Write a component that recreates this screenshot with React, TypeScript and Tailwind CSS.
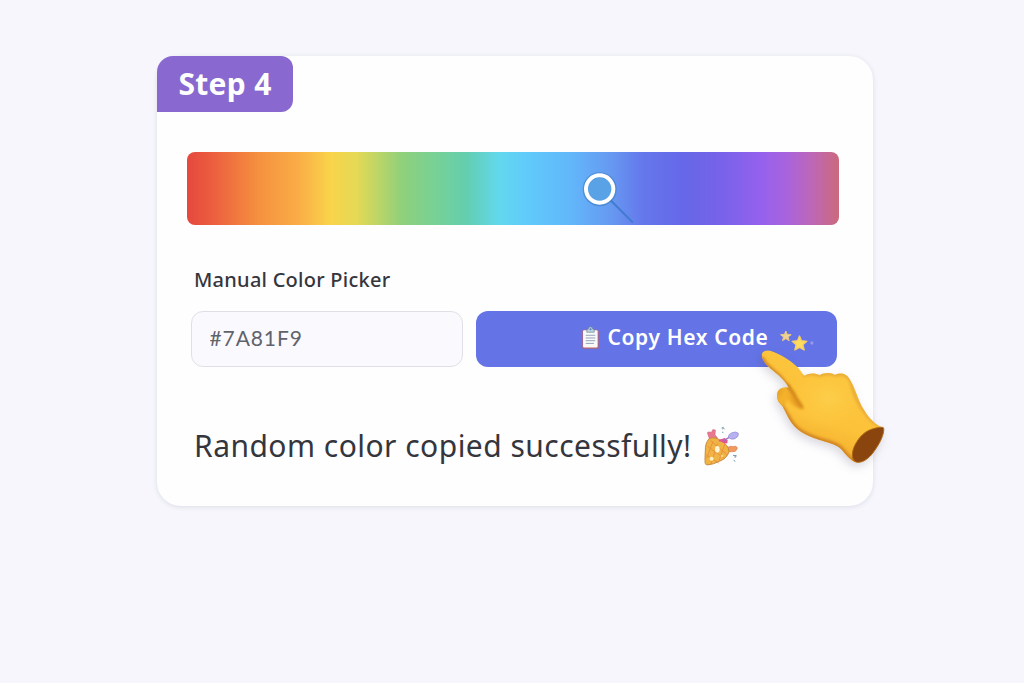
import { useState } from "react";

const SPECTRUM =
    "bg-[linear-gradient(90deg,#e5483e_0%,#ec5e3f_4%,#f5913f_11%,#faac46_17%,#f9d44a_22%,#e5d955_26%,#8fd07b_33%,#78d195_38%,#63ceb0_43%,#62d8ef_48%,#60cbfa_52%,#62b6fa_59%,#6699f1_65%,#6577ec_70%,#6568e8_76%,#7862ea_82%,#9561ed_88%,#a963dc_92%,#bd67b5_96%,#cc697c_100%)]";

function Magnifier() {
    return (
        <svg viewBox="0 0 240 225" className="absolute left-[383px] top-2 w-20 h-[75px]" aria-hidden="true">
            <path d="M124 123L187 186" stroke="#427cd0" strokeWidth="6" strokeLinecap="round" />
            <circle cx="89" cy="88" r="43" fill="#59a2e5" stroke="#397bbd" strokeOpacity=".55" strokeWidth="16" />
            <circle cx="89" cy="87" r="41" fill="none" stroke="#fff" strokeWidth="12" />
        </svg>
    );
}

function Clipboard() {
    return (
        <svg viewBox="0 0 56 70" className="w-[19px] h-6" aria-hidden="true">
            <rect x="4" y="11" width="48" height="56" rx="5" fill="#b9636c" />
            <rect x="6" y="12" width="43" height="51" rx="3" fill="#faf9f7" />
            <path d="M17 18v-6q0-3 4-3 1-7 7-7t7 7q4 0 4 3v6z" fill="#b9d6dc" stroke="#68869c" strokeWidth="2" />
            <circle cx="28" cy="9" r="3" fill="#6273b8" />
            <path d="M14 27h28M14 35h28M14 43h28M14 51h24" stroke="#8194b5" strokeWidth="2.5" />
        </svg>
    );
}

function Stars() {
    return (
        <svg viewBox="0 0 110 66" className="w-[37px] h-[22px]" aria-hidden="true">
            <path d="M20 3l4 10 12 1-9 7 3 11-10-6-10 6 3-11-9-7 12-1z" fill="#f1d391" stroke="#e6c689" strokeWidth="3" strokeLinejoin="round" />
            <path d="M61 18l6 14 16 2-12 10 4 16-14-8-14 8 4-16-12-10 16-2z" fill="#ffdc5b" stroke="#f2cd68" strokeWidth="4" strokeLinejoin="round" />
            <circle cx="98" cy="39" r="5" fill="#9298eb" />
        </svg>
    );
}

function PartyPopper() {
    return (
        <svg viewBox="0 0 180 180" className="size-[60px] shrink-0" aria-hidden="true">
            <path d="M58 70L53 56q-2-6 4-5l8 1 3-8 8 1-1 14 7 10-13 8z" fill="#e8788d" stroke="#d7657e" strokeWidth="2" />
            <path d="M115 96q7-4 14-1l8-1q7 3 4 8l-5 7q-11 2-21 1z" fill="#f29a5d" stroke="#d9784b" strokeWidth="2" />
            <path d="M57 71q18-8 37 7 22 13 23 32-6 20-29 29-16 9-38 11-6-3-5-13 0-14 1-29-1-23 11-37z" fill="#efb444" stroke="#c98b3e" strokeWidth="3" />
            <path d="M53 94l52 38M49 120l37 24M61 76l51 44M63 147l20-62M87 137l18-51M50 130l19-51" fill="none" stroke="#e9893f" strokeWidth="2.5" />
            <ellipse cx="82" cy="103" rx="7" ry="10" fill="#fff5d5" />
            <circle cx="65" cy="131" r="6" fill="#fff0bf" />
            <circle cx="96" cy="123" r="4" fill="#f9da79" />
            <path d="M85 79q3-8 11-7l7-3 10 6-1 10q-11 1-17-5z" fill="#dc5794" />
            <path d="M101 76l17-9" stroke="#9b74c4" strokeWidth="4" />
            <path d="M115 67q-1-9 11-14 13-5 19 2 2 11-10 16-12 5-20-4z" fill="#b7b1f2" stroke="#8e85ce" strokeWidth="2" />
            <path d="M95 39l5-2-2 6M96 51l4 2M129 121l10 1-6 4M131 136l5 3" fill="none" stroke="#739ab1" strokeWidth="3" />
            <path d="M101 39l2 4M138 123l-2 5" stroke="#98af66" strokeWidth="3" />
        </svg>
    );
}

function PointingHand() {
    return (
        <svg
            viewBox="0 0 480 450"
            className="absolute left-[583px] top-[274px] w-40 h-[150px] overflow-visible drop-shadow-[-2px_4px_5px_rgba(50,45,70,0.18)] pointer-events-none"
            aria-hidden="true"
        >
            <defs>
                <linearGradient id="skin" x1="0.7" y1="0" x2="0.35" y2="1">
                    <stop offset="0" stopColor="#fbc63d" />
                    <stop offset="0.6" stopColor="#fcc23a" />
                    <stop offset="0.86" stopColor="#f3ad2b" />
                    <stop offset="1" stopColor="#dc8b1c" />
                </linearGradient>
                <radialGradient id="palm">
                    <stop offset="0" stopColor="#fdce4b" />
                    <stop offset="1" stopColor="#fdc83e" stopOpacity="0" />
                </radialGradient>
                <linearGradient id="thumb" x1="0" y1="0" x2="1" y2="0.5">
                    <stop offset="0" stopColor="#dc971f" />
                    <stop offset="0.4" stopColor="#f5b42d" />
                    <stop offset="1" stopColor="#e79a20" />
                </linearGradient>
                <clipPath id="hand">
                    <path d="M66 81C61 66 77 58 93 63C119 72 151 90 173 112C182 121 187 133 194 137C207 128 227 129 239 136C250 127 274 127 285 135C298 126 321 130 329 148C345 172 353 207 369 235C386 265 407 286 431 294L350 398C334 393 320 377 308 362C294 344 270 340 247 332C215 323 174 307 155 279C143 262 136 244 127 228C115 216 108 205 112 188C116 175 131 170 147 174C138 158 128 148 115 135C95 118 71 102 66 81Z" />
                </clipPath>
                <filter id="soft">
                    <feGaussianBlur stdDeviation="5" />
                </filter>
            </defs>
            <g clipPath="url(#hand)">
                <path fill="url(#skin)" d="M40 40H450V420H40Z" />
                <ellipse cx="265" cy="205" rx="115" ry="95" fill="url(#palm)" />
                <path d="M66 81C71 102 95 118 115 135C133 152 150 178 163 198" fill="none" stroke="#cf8220" strokeWidth="10" filter="url(#soft)" />
                <path d="M112 205C119 225 136 244 155 279C174 307 215 323 247 332C281 341 297 347 308 362C320 377 334 393 350 398" fill="none" stroke="#d08222" strokeWidth="14" filter="url(#soft)" />
                <path d="M107 184C119 164 153 173 163 190L188 236C171 236 153 223 143 205L130 231C109 217 105 203 107 184Z" fill="url(#thumb)" filter="url(#soft)" />
                <path d="M142 163C155 190 174 211 188 235" fill="none" stroke="#cb7c12" strokeWidth="7" filter="url(#soft)" />
                <path d="M190 136Q212 126 240 136Q260 126 286 135Q319 126 332 152Q343 207 374 246Q394 278 430 293" fill="none" stroke="#e0a136" strokeWidth="7" filter="url(#soft)" />
            </g>
            <path d="M431 294C434 313 417 345 397 371C381 391 360 400 349 396C333 392 334 365 346 343C358 320 376 302 400 296C415 292 428 290 431 294Z" fill="#8a450f" stroke="#b06a18" strokeWidth="3" />
        </svg>
    );
}

export default function App() {
    const [hex, setHex] = useState("#7A81F9");

    return (
        <main className="h-[683px] bg-[#f6f6fc] pt-14 pl-[157px] font-['Noto_Sans','Open_Sans',sans-serif] text-[#35363d] overflow-hidden">
            <section className="relative w-[716px] h-[450px] rounded-3xl bg-[#fefeff] shadow-[0_1px_5px_rgba(45,40,85,0.12)]">
                <h1 className="flex items-center justify-center w-[136px] h-14 pb-px rounded-tl-[16px] rounded-r-xl bg-[#8969cf] text-[30px] tracking-[0.3px] font-bold text-white">
                    Step 4
                </h1>

                <div className={`relative mt-10 ml-[29.5px] w-[652px] h-[73px] rounded-lg overflow-hidden ${SPECTRUM}`}>
                    <Magnifier />
                </div>

                <label htmlFor="hex" className="block mt-[39px] ml-[37px] h-8 leading-8 text-[20px] font-medium tracking-[0.25px]">
                    Manual Color Picker
                </label>

                <div className="flex gap-[13px] mt-[14.5px] ml-[33.5px]">
                    <input
                        id="hex"
                        value={hex}
                        onChange={(e) => setHex(e.target.value)}
                        className="w-[272px] h-14 px-[18px] pb-0.5 rounded-xl border border-[#dfdfe7] bg-[#fafafe] text-[21px] text-[#60636b] font-['Lato','Noto_Sans',sans-serif] tracking-[0.9px] outline-none"
                    />
                    <button
                        onClick={() => navigator.clipboard?.writeText(hex)}
                        className="flex items-center w-[361px] h-14 pl-[105px] pb-px rounded-xl bg-[#6474e6] text-white"
                    >
                        <Clipboard />
                        <span className="ml-2 w-[161px] text-[21px] font-semibold whitespace-nowrap text-left tracking-[0.63px]">Copy Hex Code</span>
                        <span className="ml-[10px] mt-[5px]">
                            <Stars />
                        </span>
                    </button>
                </div>

                <div className="flex items-center mt-[48.5px] ml-[37px] h-[60px]">
                    <p className="w-[496px] text-[30px] tracking-[0.47px] whitespace-nowrap">Random color copied successfully!</p>
                    <PartyPopper />
                </div>

                <PointingHand />
            </section>
        </main>
    );
}
